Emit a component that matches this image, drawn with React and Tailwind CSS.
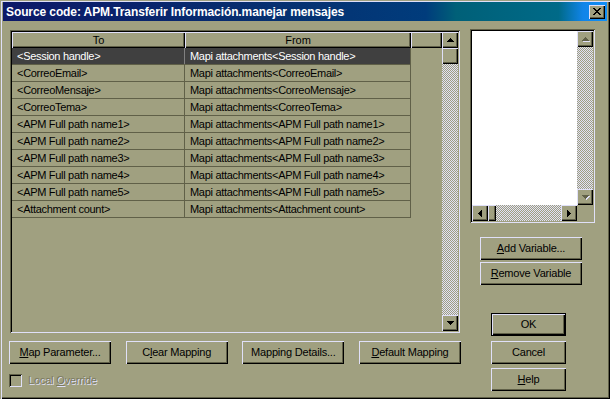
import React from "react"

const rows = [
  "Session handle",
  "CorreoEmail",
  "CorreoMensaje",
  "CorreoTema",
  "APM Full path name1",
  "APM Full path name2",
  "APM Full path name3",
  "APM Full path name4",
  "APM Full path name5",
  "Attachment count",
]

const raised =
  "shadow-[inset_1px_1px_0_#e0e0f8,inset_-1px_-1px_0_#000,inset_-2px_-2px_0_#606048]"
const sunken =
  "shadow-[inset_1px_1px_0_#606048,inset_-1px_-1px_0_#e0e0f8,inset_2px_2px_0_#000,inset_-2px_-2px_0_#a0a080]"
const checker =
  "bg-[image:repeating-conic-gradient(#e0e0f8_0_25%,#a0a080_0_50%)] bg-[length:2px_2px]"

const arrows = {
  up: { w: 7, h: 4, d: "M3 0h1v1h1v1h1v1h1v1H0V3h1V2h1V1h1z" },
  down: { w: 7, h: 4, d: "M0 0h7v1h-1v1h-1v1h-1v1H3V3H2V2H1V1H0z" },
  left: { w: 4, h: 7, d: "M3 0h1v7H3V6H2V5H1V4H0V3h1V2h1V1h1z" },
  right: { w: 4, h: 7, d: "M0 0h1v1h1v1h1v1h1v1H3v1H2v1H1v1H0z" },
}

function Arrow({ dir, disabled }) {
  const a = arrows[dir]
  return (
    <svg width={a.w + 1} height={a.h + 1} viewBox={`0 0 ${a.w + 1} ${a.h + 1}`}>
      {disabled && <path d={a.d} fill="#e0e0f8" transform="translate(1 1)" />}
      <path d={a.d} fill={disabled ? "#606048" : "#000"} />
    </svg>
  )
}

function ScrollBtn({ dir, disabled }) {
  return (
    <div className={`w-[16px] h-[16px] shrink-0 bg-[#a0a080] flex items-center justify-center pl-[1px] pt-[1px] ${raised}`}>
      <Arrow dir={dir} disabled={disabled} />
    </div>
  )
}

function Btn({ children, className = "", isDefault }) {
  return (
    <div
      className={`h-[23px] flex items-center justify-center tracking-[-0.2px] text-black ${
        isDefault
          ? "shadow-[inset_0_0_0_1px_#000,inset_2px_2px_0_#e0e0f8,inset_-2px_-2px_0_#000,inset_-3px_-3px_0_#606048]"
          : raised
      } ${className}`}
    >
      <span className="-mt-[1px]">{children}</span>
    </div>
  )
}

const closeX = [
  [0, 0], [1, 0], [6, 0], [7, 0],
  [1, 1], [2, 1], [5, 1], [6, 1],
  [2, 2], [3, 2], [4, 2], [5, 2],
  [3, 3], [4, 3],
  [2, 4], [3, 4], [4, 4], [5, 4],
  [1, 5], [2, 5], [5, 5], [6, 5],
  [0, 6], [1, 6], [6, 6], [7, 6],
]

export default function App() {
  return (
    <div className="w-[610px] h-[399px] bg-[#a0a080] px-[3px] pt-[2px] font-['Liberation_Sans',Arial,sans-serif] text-[11px] text-black shadow-[inset_1px_1px_0_#a0a080,inset_2px_2px_0_#e0e0f8,inset_-1px_-1px_0_#000,inset_-2px_-2px_0_#606048] overflow-hidden">
      {/* title bar */}
      <div className="h-[19px] flex items-center pl-[3px] pr-[2px] bg-[linear-gradient(90deg,#0c1868_0%,#063070_45%,#003c7c_70%,#006078_75%,#006a88_92%,#1084e8_96%,#1090f8_100%)]">
        <span className="text-white font-bold text-[12px] tracking-[-0.1px] flex-1 whitespace-nowrap">
          Source code: APM.Transferir Información.manejar mensajes
        </span>
        <div className={`w-[16px] h-[14px] bg-[#a0a080] flex items-center justify-center ${raised}`}>
          <svg width="8" height="7" viewBox="0 0 8 7" className="-mt-[1px]">
            {closeX.map(([x, y]) => (
              <rect key={`${x}-${y}`} x={x} y={y} width="1" height="1" fill="#000" />
            ))}
          </svg>
        </div>
      </div>

      <div className="flex pl-[6px] gap-[9px]">
        {/* left column */}
        <div className="w-[452px] mt-[9px] flex flex-col">
          <div className={`ml-[1px] w-[450px] h-[303px] p-[2px] flex ${sunken}`}>
            <div className="w-[430px] flex flex-col">
              <div className="flex h-[16px] shrink-0">
                <div className={`w-[173px] flex items-center justify-center ${raised}`}>To</div>
                <div className={`w-[226px] flex items-center justify-center ${raised}`}>From</div>
                <div className={`w-[31px] ${raised}`} />
              </div>
              {rows.map((r, i) => {
                const sel = i === 0
                return (
                  <div
                    key={r}
                    className={`flex h-[17px] w-[399px] border-b border-[#606048] tracking-[-0.3px] whitespace-nowrap ${
                      sel ? "bg-[#404040] text-white border-[#5a5a50]" : ""
                    }`}
                  >
                    <div className={`w-[173px] pl-[5px] flex items-center border-r ${sel ? "border-[#808080]" : "border-[#606048]"}`}>
                      &lt;{r}&gt;
                    </div>
                    <div className="w-[226px] pl-[5px] flex items-center border-r border-[#606048]">
                      Mapi attachments&lt;{r}&gt;
                    </div>
                  </div>
                )
              })}
            </div>
            <div className="w-[16px] flex flex-col">
              <ScrollBtn dir="up" />
              <div className={`h-[16px] shrink-0 bg-[#a0a080] ${raised}`} />
              <div className={`flex-1 ${checker}`} />
              <ScrollBtn dir="down" />
            </div>
          </div>

          <div className="mt-[8px] flex justify-between">
            <Btn className="w-[102px]"><u>M</u>ap Parameter...</Btn>
            <Btn className="w-[102px]">C<u>l</u>ear Mapping</Btn>
            <Btn className="w-[102px]">Mapping Details...</Btn>
            <Btn className="w-[102px]"><u>D</u>efault Mapping</Btn>
          </div>

          <div className="mt-[8px] flex items-center gap-[6px]">
            <div className={`w-[13px] h-[13px] bg-[#a0a080] ${sunken}`} />
            <span className="text-[#7a7a60] [text-shadow:1px_1px_0_#e0e0f8] tracking-[-0.2px]">
              Local <u>O</u>verride
            </span>
          </div>
        </div>

        {/* right column */}
        <div className="w-[125px] mt-[8px] flex flex-col">
          <div className={`h-[194px] p-[2px] flex flex-col ${sunken}`}>
            <div className="flex h-[174px]">
              <div className="w-[105px] bg-white" />
              <div className="w-[16px] flex flex-col">
                <ScrollBtn dir="up" disabled />
                <div className={`flex-1 ${checker}`} />
                <ScrollBtn dir="down" disabled />
              </div>
            </div>
            <div className="flex h-[16px]">
              <div className="w-[105px] flex">
                <ScrollBtn dir="left" />
                <div className={`w-[8px] h-[16px] shrink-0 bg-[#a0a080] ${raised}`} />
                <div className={`flex-1 ${checker}`} />
                <ScrollBtn dir="right" />
              </div>
              <div className="w-[16px] bg-[#a0a080]" />
            </div>
          </div>

          <Btn className="w-[102px] ml-[10px] mt-[14px]"><u>A</u>dd Variable...</Btn>
          <Btn className="w-[102px] ml-[10px] mt-[2px]"><u>R</u>emove Variable</Btn>

          <Btn isDefault className="w-[75px] ml-[21px] mt-[28px]">OK</Btn>
          <Btn className="w-[75px] ml-[21px] mt-[5px]">Cancel</Btn>
          <Btn className="w-[75px] ml-[21px] mt-[4px]"><u>H</u>elp</Btn>
        </div>
      </div>
    </div>
  )
}
